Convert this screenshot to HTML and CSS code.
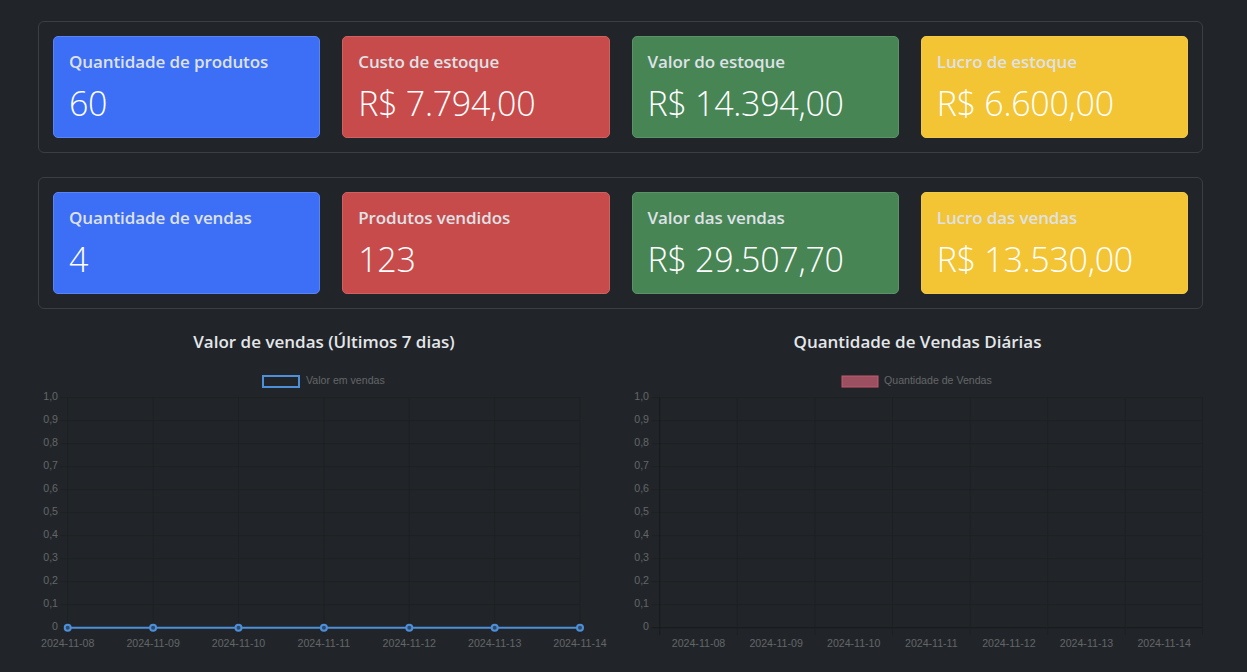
FILE: index.html
```html
<!DOCTYPE html>
<html lang="pt-BR">
<head>
<meta charset="utf-8">
<title>Dashboard</title>
<link rel="stylesheet" href="styles.css">
</head>
<body>
<div class="container">
  <section class="stats-box">
    <div class="card card-blue"><div class="card-title">Quantidade de produtos</div><div class="card-value">60</div></div>
    <div class="card card-red"><div class="card-title">Custo de estoque</div><div class="card-value">R$ 7.794,00</div></div>
    <div class="card card-green"><div class="card-title">Valor do estoque</div><div class="card-value">R$ 14.394,00</div></div>
    <div class="card card-yellow"><div class="card-title">Lucro de estoque</div><div class="card-value">R$ 6.600,00</div></div>
  </section>
  <section class="stats-box">
    <div class="card card-blue"><div class="card-title">Quantidade de vendas</div><div class="card-value">4</div></div>
    <div class="card card-red"><div class="card-title">Produtos vendidos</div><div class="card-value">123</div></div>
    <div class="card card-green"><div class="card-title">Valor das vendas</div><div class="card-value">R$ 29.507,70</div></div>
    <div class="card card-yellow"><div class="card-title">Lucro das vendas</div><div class="card-value">R$ 13.530,00</div></div>
  </section>
  <section class="charts">
    <div class="chart-col">
      <h5 class="chart-title">Valor de vendas (Últimos 7 dias)</h5>
      <svg class="chart" width="572" height="300" viewBox="0 0 572 300">
        <g class="grid">
          <line x1="22" y1="36.7" x2="542" y2="36.7"/>
          <line x1="22" y1="59.7" x2="542" y2="59.7"/>
          <line x1="22" y1="82.7" x2="542" y2="82.7"/>
          <line x1="22" y1="105.7" x2="542" y2="105.7"/>
          <line x1="22" y1="128.7" x2="542" y2="128.7"/>
          <line x1="22" y1="151.7" x2="542" y2="151.7"/>
          <line x1="22" y1="174.7" x2="542" y2="174.7"/>
          <line x1="22" y1="197.7" x2="542" y2="197.7"/>
          <line x1="22" y1="220.7" x2="542" y2="220.7"/>
          <line x1="22" y1="243.7" x2="542" y2="243.7"/>
          <line x1="22" y1="266.7" x2="542" y2="266.7"/>
          <line x1="29.7" y1="36.7" x2="29.7" y2="274"/>
          <line x1="115.1" y1="36.7" x2="115.1" y2="274"/>
          <line x1="200.5" y1="36.7" x2="200.5" y2="274"/>
          <line x1="285.9" y1="36.7" x2="285.9" y2="274"/>
          <line x1="371.3" y1="36.7" x2="371.3" y2="274"/>
          <line x1="456.7" y1="36.7" x2="456.7" y2="274"/>
          <line x1="542" y1="36.7" x2="542" y2="274"/>
        </g>
        <g class="ylabels">
          <text x="20" y="36.7">1,0</text><text x="20" y="59.7">0,9</text><text x="20" y="82.7">0,8</text>
          <text x="20" y="105.7">0,7</text><text x="20" y="128.7">0,6</text><text x="20" y="151.7">0,5</text>
          <text x="20" y="174.7">0,4</text><text x="20" y="197.7">0,3</text><text x="20" y="220.7">0,2</text>
          <text x="20" y="243.7">0,1</text><text x="20" y="266.7">0</text>
        </g>
        <g class="xlabels">
          <text x="29.7" y="283">2024-11-08</text><text x="115.1" y="283">2024-11-09</text>
          <text x="200.5" y="283">2024-11-10</text><text x="285.9" y="283">2024-11-11</text>
          <text x="371.3" y="283">2024-11-12</text><text x="456.7" y="283">2024-11-13</text>
          <text x="542" y="283">2024-11-14</text>
        </g>
        <rect class="legend-line" x="225" y="15" width="36" height="11"/>
        <text class="legend-text" x="268" y="20.5">Valor em vendas</text>
        <line class="series" x1="29.7" y1="266.7" x2="542" y2="266.7"/>
        <g class="points">
          <circle cx="29.7" cy="266.7" r="3"/><circle cx="115.1" cy="266.7" r="3"/>
          <circle cx="200.5" cy="266.7" r="3"/><circle cx="285.9" cy="266.7" r="3"/>
          <circle cx="371.3" cy="266.7" r="3"/><circle cx="456.7" cy="266.7" r="3"/>
          <circle cx="542" cy="266.7" r="3"/>
        </g>
      </svg>
    </div>
    <div class="chart-col">
      <h5 class="chart-title">Quantidade de Vendas Diárias</h5>
      <svg class="chart" width="571" height="300" viewBox="0 0 571 300">
        <g class="grid">
          <line x1="19.7" y1="36.7" x2="571" y2="36.7"/>
          <line x1="19.7" y1="59.7" x2="571" y2="59.7"/>
          <line x1="19.7" y1="82.7" x2="571" y2="82.7"/>
          <line x1="19.7" y1="105.7" x2="571" y2="105.7"/>
          <line x1="19.7" y1="128.7" x2="571" y2="128.7"/>
          <line x1="19.7" y1="151.7" x2="571" y2="151.7"/>
          <line x1="19.7" y1="174.7" x2="571" y2="174.7"/>
          <line x1="19.7" y1="197.7" x2="571" y2="197.7"/>
          <line x1="19.7" y1="220.7" x2="571" y2="220.7"/>
          <line x1="19.7" y1="243.7" x2="571" y2="243.7"/>
          <line x1="19.7" y1="266.7" x2="571" y2="266.7" class="zero"/>
          <line x1="27.7" y1="36.7" x2="27.7" y2="274" class="zero"/>
          <line x1="105.3" y1="36.7" x2="105.3" y2="274"/>
          <line x1="182.9" y1="36.7" x2="182.9" y2="274"/>
          <line x1="260.5" y1="36.7" x2="260.5" y2="274"/>
          <line x1="338.1" y1="36.7" x2="338.1" y2="274"/>
          <line x1="415.7" y1="36.7" x2="415.7" y2="274"/>
          <line x1="493.3" y1="36.7" x2="493.3" y2="274"/>
          <line x1="570.5" y1="36.7" x2="570.5" y2="274"/>
        </g>
        <g class="ylabels">
          <text x="17" y="36.7">1,0</text><text x="17" y="59.7">0,9</text><text x="17" y="82.7">0,8</text>
          <text x="17" y="105.7">0,7</text><text x="17" y="128.7">0,6</text><text x="17" y="151.7">0,5</text>
          <text x="17" y="174.7">0,4</text><text x="17" y="197.7">0,3</text><text x="17" y="220.7">0,2</text>
          <text x="17" y="243.7">0,1</text><text x="17" y="266.7">0</text>
        </g>
        <g class="xlabels">
          <text x="66.5" y="283">2024-11-08</text><text x="144.1" y="283">2024-11-09</text>
          <text x="221.7" y="283">2024-11-10</text><text x="299.3" y="283">2024-11-11</text>
          <text x="376.9" y="283">2024-11-12</text><text x="454.5" y="283">2024-11-13</text>
          <text x="532.1" y="283">2024-11-14</text>
        </g>
        <rect class="legend-bar" x="210" y="15" width="36" height="11"/>
        <text class="legend-text" x="252" y="20.5">Quantidade de Vendas</text>
      </svg>
    </div>
  </section>
</div>
</body>
</html>
```

FILE: styles.css
```css
* { box-sizing: border-box; }

body {
  margin: 0;
  background: #212529;
  font-family: "Open Sans", "Noto Sans", sans-serif;
  color: #dee2e6;
}

.container {
  width: 1165px;
  margin: 21px 0 0 38px;
}

.stats-box {
  display: grid;
  grid-template-columns: repeat(4, 1fr);
  gap: 22px;
  padding: 14px;
  border: 1px solid #3a3f44;
  border-radius: 6px;
  margin-bottom: 24px;
}

.stats-box + .stats-box { margin-bottom: 0; }

.card {
  height: 102px;
  padding: 15px 15px 14px;
  border-radius: 5px;
  border: 1px solid transparent;
}

.card-blue { background: #3d6ef6; border-color: #5a84f3; }
.card-red { background: #c84b4b; border-color: #cf6161; }
.card-green { background: #478555; border-color: #5a9368; }
.card-yellow { background: #f3c433; border-color: #f3c94a; }

.card-title {
  font-size: 17px;
  font-weight: 600;
  line-height: 20px;
  color: #dee2e6;
  letter-spacing: -0.1px;
  margin-bottom: 11px;
}

.card-value {
  font-size: 34px;
  font-weight: 300;
  line-height: 40px;
  color: #ffffff;
  letter-spacing: -0.3px;
}

.charts {
  display: grid;
  grid-template-columns: 572px 571px;
  gap: 22px;
}

.chart-title {
  margin: 21px 0 7px;
  font-size: 17px;
  font-weight: 600;
  line-height: 24px;
  text-align: center;
  color: #e4e7ea;
}

.chart {
  display: block;
  font-family: "Liberation Sans", Arial, sans-serif;
}

.grid line {
  stroke: #1d2023;
  stroke-width: 1;
}

.grid line.zero { stroke: #18191c; }

.ylabels text {
  fill: #646668;
  font-size: 10.6px;
  text-anchor: end;
  dominant-baseline: middle;
}

.xlabels text {
  fill: #646668;
  font-size: 10.6px;
  text-anchor: middle;
  dominant-baseline: middle;
}

.legend-text {
  fill: #646668;
  font-size: 10.6px;
  dominant-baseline: middle;
}

.legend-line {
  fill: none;
  stroke: #4e8fd9;
  stroke-width: 2;
}

.legend-bar {
  fill: #9c4f60;
  stroke: #c45a6f;
  stroke-width: 1;
}

.series {
  stroke: #4e8fd9;
  stroke-width: 2;
}

.points circle {
  fill: #2e4a6a;
  stroke: #4e8fd9;
  stroke-width: 2;
}
```
